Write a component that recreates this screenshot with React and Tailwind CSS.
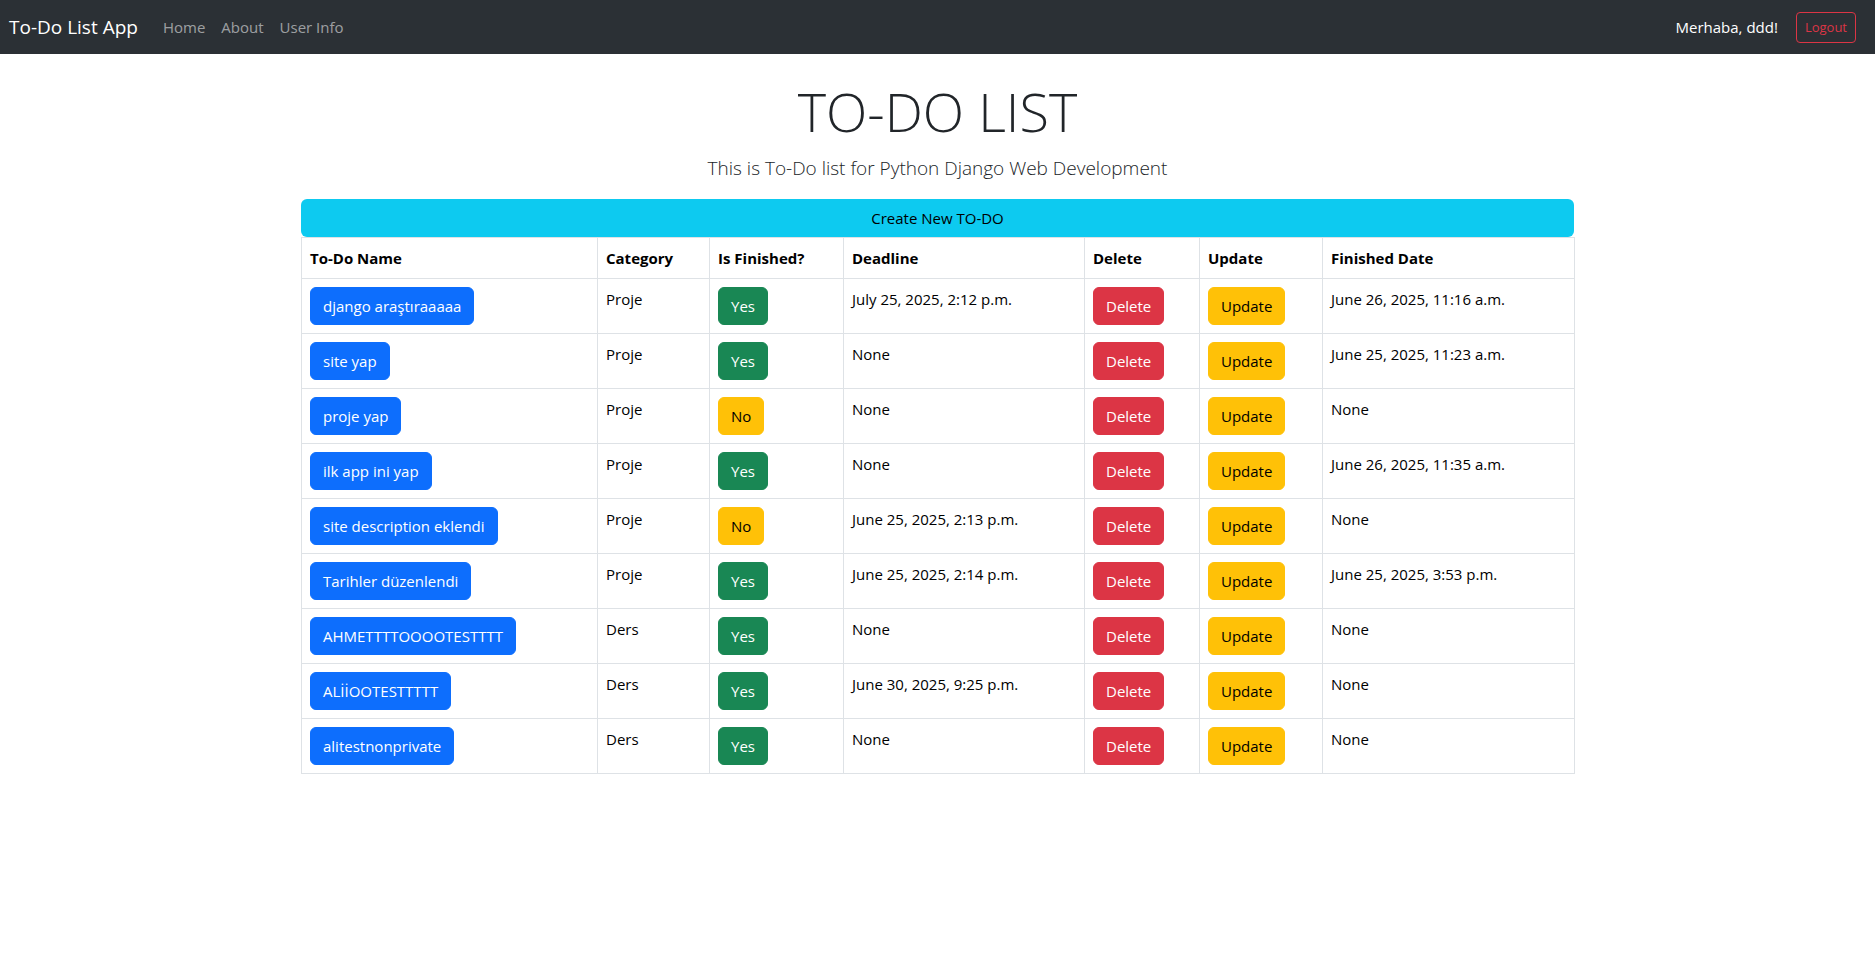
const todos = [
  { name: 'django araştıraaaaa', cat: 'Proje', done: true, deadline: 'July 25, 2025, 2:12 p.m.', finished: 'June 26, 2025, 11:16 a.m.' },
  { name: 'site yap', cat: 'Proje', done: true, deadline: 'None', finished: 'June 25, 2025, 11:23 a.m.' },
  { name: 'proje yap', cat: 'Proje', done: false, deadline: 'None', finished: 'None' },
  { name: 'ilk app ini yap', cat: 'Proje', done: true, deadline: 'None', finished: 'June 26, 2025, 11:35 a.m.' },
  { name: 'site description eklendi', cat: 'Proje', done: false, deadline: 'June 25, 2025, 2:13 p.m.', finished: 'None' },
  { name: 'Tarihler düzenlendi', cat: 'Proje', done: true, deadline: 'June 25, 2025, 2:14 p.m.', finished: 'June 25, 2025, 3:53 p.m.' },
  { name: 'AHMETTTTOOOOTESTTTT', cat: 'Ders', done: true, deadline: 'None', finished: 'None' },
  { name: 'ALİİOOTESTTTTT', cat: 'Ders', done: true, deadline: 'June 30, 2025, 9:25 p.m.', finished: 'None' },
  { name: 'alitestnonprivate', cat: 'Ders', done: true, deadline: 'None', finished: 'None' }
]

const btn = 'inline-block px-[12px] py-[6px] border rounded-[6px] text-[15px] leading-[24px] cursor-pointer'
const cell = 'border border-[#dee2e6] px-[8px] py-[8px] text-left align-top leading-[24px]'

export default function App() {
  return (
    <div className="min-h-screen bg-white font-['Open_Sans',sans-serif] text-[15px] text-[#212529]">
      {/* navbar */}
      <nav className="h-[54px] bg-[#2b3035] flex items-center pl-[9px] pr-[19px]">
        <a className="text-[19px] leading-[30px] text-white mr-[17px]">To-Do List App</a>
        <a className="px-[8px] text-[rgba(255,255,255,0.55)]">Home</a>
        <a className="px-[8px] text-[rgba(255,255,255,0.55)]">About</a>
        <a className="px-[8px] text-[rgba(255,255,255,0.55)]">User Info</a>
        <div className="ml-auto flex items-center gap-[18px]">
          <span className="text-white">Merhaba, ddd!</span>
          <button className="px-[8px] py-[4px] text-[13px] leading-[21px] border border-[#dc3545] text-[#dc3545] rounded-[4px]">
            Logout
          </button>
        </div>
      </nav>

      <div className="text-center mt-[25px]">
        <h1 className="text-[54px] font-light leading-[1.2]">TO-DO LIST</h1>
        <p className="text-[19px] font-light leading-[30px] mt-[9px]">This is To-Do list for Python Django Web Development</p>
      </div>

      <div className="w-[1273px] mx-auto mt-[16px]">
        <button className="w-full h-[38px] bg-[#0dcaf0] text-black rounded-[6px] text-[15px]">Create New TO-DO</button>
        <table className="w-full table-fixed border-collapse text-black">
          <colgroup>
            <col className="w-[296px]" />
            <col className="w-[112px]" />
            <col className="w-[134px]" />
            <col className="w-[241px]" />
            <col className="w-[115px]" />
            <col className="w-[123px]" />
            <col className="w-[252px]" />
          </colgroup>
          <thead>
            <tr>
              <th className={cell + ' font-bold'}>To-Do Name</th>
              <th className={cell + ' font-bold'}>Category</th>
              <th className={cell + ' font-bold'}>Is Finished?</th>
              <th className={cell + ' font-bold'}>Deadline</th>
              <th className={cell + ' font-bold'}>Delete</th>
              <th className={cell + ' font-bold'}>Update</th>
              <th className={cell + ' font-bold'}>Finished Date</th>
            </tr>
          </thead>
          <tbody>
            {todos.map((t, i) => (
              <tr key={i}>
                <td className={cell}>
                  <span className={btn + ' bg-[#0d6efd] border-[#0d6efd] text-white whitespace-nowrap'}>{t.name}</span>
                </td>
                <td className={cell}>{t.cat}</td>
                <td className={cell}>
                  {t.done ? (
                    <span className={btn + ' bg-[#198754] border-[#198754] text-white'}>Yes</span>
                  ) : (
                    <span className={btn + ' bg-[#ffc107] border-[#ffc107] text-black'}>No</span>
                  )}
                </td>
                <td className={cell}>{t.deadline}</td>
                <td className={cell}>
                  <span className={btn + ' bg-[#dc3545] border-[#dc3545] text-white'}>Delete</span>
                </td>
                <td className={cell}>
                  <span className={btn + ' bg-[#ffc107] border-[#ffc107] text-black'}>Update</span>
                </td>
                <td className={cell}>{t.finished}</td>
              </tr>
            ))}
          </tbody>
        </table>
      </div>
    </div>
  )
}
